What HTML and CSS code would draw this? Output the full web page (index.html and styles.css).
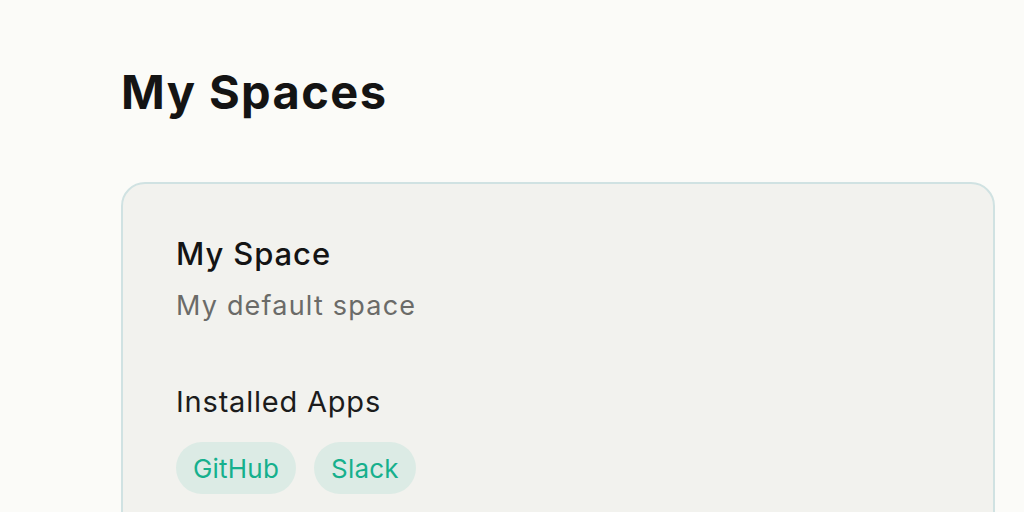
FILE: index.html
```html
<!DOCTYPE html>
<html>
<head>
<meta charset="utf-8">
<link rel="stylesheet" href="styles.css">
</head>
<body>
<main class="page">
  <h1 class="title">My Spaces</h1>
  <section class="card">
    <h2 class="space-name">My Space</h2>
    <p class="space-desc">My default space</p>
    <h3 class="apps-label">Installed Apps</h3>
    <div class="apps">
      <span class="pill">GitHub</span>
      <span class="pill">Slack</span>
    </div>
  </section>
</main>
</body>
</html>
```
FILE: styles.css
```css
html, body {
  margin: 0;
  padding: 0;
  background: #fbfbf8;
  font-family: Inter, "Noto Sans", sans-serif;
  color: #141414;
  overflow: hidden;
}
.page {
  padding: 60px 29px 0 121px;
}
.title {
  margin: 0;
  font-size: 47px;
  font-weight: 700;
  line-height: 64px;
  letter-spacing: 1.4px;
}
.card {
  margin-top: 58px;
  background: #f2f2ee;
  border: 2px solid #d0e2e2;
  border-radius: 24px;
  padding: 50px 53px 40px;
  height: 400px;
}
.space-name {
  margin: 0;
  font-size: 31px;
  font-weight: 500;
  line-height: 40px;
  letter-spacing: 0.9px;
}
.space-desc {
  margin: 14px 0 0;
  font-size: 27px;
  line-height: 36px;
  letter-spacing: 1.2px;
  color: #6b6b68;
}
.apps-label {
  margin: 58px 0 0;
  font-size: 29px;
  font-weight: 400;
  line-height: 40px;
  letter-spacing: 0.8px;
  color: #1c1c1c;
}
.apps {
  display: flex;
  gap: 18px;
  margin-top: 20px;
}
.pill {
  display: inline-flex;
  align-items: center;
  height: 52px;
  padding: 0 17px;
  border-radius: 26px;
  background: #dcebe5;
  color: #16b08d;
  font-size: 26px;
  letter-spacing: 0.2px;
}
```
